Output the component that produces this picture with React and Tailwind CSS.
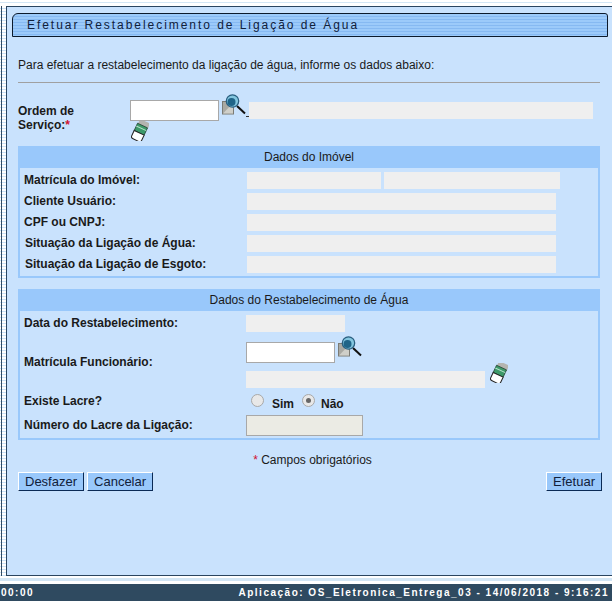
const Lupa = ({ className }) => (
  <svg viewBox="0 0 24 21" className={className}>
    <rect x="0.5" y="7.5" width="11" height="12.5" fill="#a9a9a3" stroke="#7b7b75" />
    <path d="M1 19.5 L11 9 L11 19.5 Z" fill="#cfcfc9" />
    <line x1="15" y1="12" x2="23" y2="19.5" stroke="#111" strokeWidth="2" />
    <circle cx="10.5" cy="7" r="6.2" fill="#83c6df" stroke="#2a5f80" strokeWidth="1.3" />
    <circle cx="9.5" cy="8" r="4" fill="#1f6488" />
  </svg>
);

const Borracha = ({ className }) => (
  <svg viewBox="0 0 18 20" className={className}>
    <g transform="rotate(25 9 10)">
      <rect x="4" y="-1" width="11" height="6" fill="#b4b4b0" />
      <rect x="3.5" y="4" width="11" height="8" fill="#3d9a6a" stroke="#1d3a2c" strokeWidth="0.7" />
      <line x1="3.5" y1="7" x2="14.5" y2="7" stroke="#b8e4cb" strokeWidth="1" />
      <path d="M3.5 12 L14.5 12 L14.5 18 Q14.5 20 12 20 L6 20 Q3.5 20 3.5 18 Z" fill="#fff" stroke="#222" strokeWidth="1" />
    </g>
  </svg>
);

const Campo = ({ className }) => <div className={`h-[17px] bg-[#efefef] ${className}`} />;

const Botao = ({ children }) => (
  <button className="h-[19px] bg-[#99c8fb] text-[13px] leading-[17px] text-[#10203a] border border-t-white border-l-white border-r-[#0a2a55] border-b-[#0a2a55] px-[6px]">
    {children}
  </button>
);

const Linha = ({ label, recuo, children }) => (
  <div className="flex items-center h-[21px]">
    <div className={`w-[227px] pb-[2px] text-[12px] font-bold text-[#1a1a1a] ${recuo ? 'pl-[5px]' : 'pl-[4px]'}`}>{label}</div>
    {children}
  </div>
);

const Radio = ({ checked }) => (
  <span className="w-[13px] h-[13px] mb-[3px] rounded-full border border-[#a8a8a8] bg-[#e8e8e8] flex items-center justify-center">
    {checked && <span className="w-[5px] h-[5px] rounded-full bg-[#666]" />}
  </span>
);

export default function App() {
  return (
    <div className="w-[612px] h-[601px] overflow-hidden bg-white flex flex-col font-['Liberation_Sans',Arial,sans-serif]">
      <div className="h-[6px] shrink-0 bg-white">
        <div className="h-px mt-[2px] bg-[#d3e6f5]" />
      </div>
      <div className="flex-1 flex min-h-0">
        <div className="w-[6px] shrink-0 bg-[repeating-linear-gradient(#fff_0,#fff_2px,#c9e1f7_2px,#c9e1f7_3px)]">
          <div className="ml-px w-px h-full bg-[#2f4a63]" />
        </div>
        <main className="flex-1 bg-[#c9e2fd] border-t border-l border-b border-[#2a4560] pt-[6px] pl-[5px] pr-[6px] flex flex-col">
          <div className="h-[24px] mr-[-2px] bg-[repeating-linear-gradient(#9ccafa_0,#9ccafa_2px,#86b9f2_2px,#86b9f2_3px)] border border-[#0c1a2c] rounded-tl-[6px] rounded-tr-[3px] pl-[14px] text-[12px] leading-[22px] tracking-[1.95px] text-[#10203a]">
            Efetuar Restabelecimento de Ligação de Água
          </div>

          <p className="mt-[21px] ml-[6px] text-[12px] leading-[14px] text-[#1a1a1a]">
            Para efetuar a restabelecimento da ligação de água, informe os dados abaixo:
          </p>
          <div className="mt-[10px] ml-[6px] mr-[6px] h-px bg-[#a0a0a0]" />

          <div className="mt-[17px] ml-[6px] flex">
            <div className="w-[112px] text-[12px] leading-[14px] font-bold text-[#1a1a1a] pt-[4px]">
              Ordem de<br />Serviço:<span className="text-[#d01030]">*</span>
            </div>
            <div className="flex-1">
              <div className="flex items-start h-[21px]">
                <div className="w-[89px] h-[21px] bg-white border border-[#a8a8a8]" />
                <Lupa className="w-[24px] h-[21px] -mt-[6px] ml-[3px]" />
                <div className="w-[3px] h-px mt-[16px] bg-[#333]" />
                <Campo className="w-[344px] mt-[2px]" />
              </div>
              <Borracha className="w-[18px] h-[20px] ml-px" />
            </div>
          </div>

          <section className="mt-[5px] ml-[6px] mr-[6px] border-[2px] border-t-0 border-[#99c8fb]">
            <div className="h-[22px] -mx-[2px] bg-[#99c8fb] text-center text-[12px] leading-[22px] text-[#1a1a1a]">Dados do Imóvel</div>
            <div className="pt-[2px] pb-[1px]">
              <Linha label="Matrícula do Imóvel:">
                <Campo className="w-[134px]" />
                <Campo className="w-[176px] ml-[3px]" />
              </Linha>
              <Linha label="Cliente Usuário:"><Campo className="w-[309px]" /></Linha>
              <Linha label="CPF ou CNPJ:"><Campo className="w-[309px]" /></Linha>
              <Linha label="Situação da Ligação de Água:" recuo><Campo className="w-[309px]" /></Linha>
              <Linha label="Situação da Ligação de Esgoto:" recuo><Campo className="w-[309px]" /></Linha>
            </div>
          </section>

          <section className="mt-[11px] ml-[6px] mr-[6px] border-[2px] border-t-0 border-[#99c8fb]">
            <div className="h-[22px] -mx-[2px] bg-[#99c8fb] text-center text-[12px] leading-[22px] text-[#1a1a1a]">Dados do Restabelecimento de Água</div>
            <div className="pt-[3px] pb-[2px]">
              <div className="flex items-center h-[18px]">
                <div className="w-[226px] pl-[4px] text-[12px] font-bold text-[#1a1a1a]">Data do Restabelecimento:</div>
                <Campo className="w-[99px]" />
              </div>
              <div className="flex mt-[10px]">
                <div className="w-[226px] pl-[4px] pt-[11px] text-[12px] font-bold text-[#1a1a1a]">Matrícula Funcionário:</div>
                <div>
                  <div className="flex items-start h-[27px]">
                    <div className="w-[89px] h-[21px] bg-white border border-[#a8a8a8]" />
                    <Lupa className="w-[24px] h-[21px] -mt-[6px] ml-[3px]" />
                  </div>
                  <div className="flex items-center h-[20px]">
                    <Campo className="w-[239px]" />
                    <Borracha className="w-[18px] h-[20px] ml-[5px] -mt-[12px]" />
                  </div>
                </div>
              </div>
              <div className="flex items-center h-[24px] mt-px">
                <div className="w-[231px] pb-[2px] pl-[4px] text-[12px] font-bold text-[#1a1a1a]">Existe Lacre?</div>
                <Radio />
                <span className="ml-[8px] text-[12px] font-bold text-[#1a1a1a] mt-[4px]">Sim</span>
                <span className="ml-[8px]"><Radio checked /></span>
                <span className="ml-[6px] text-[12px] font-bold text-[#1a1a1a] mt-[4px]">Não</span>
              </div>
              <div className="flex items-center h-[22px]">
                <div className="w-[226px] pl-[4px] text-[12px] font-bold text-[#1a1a1a]">Número do Lacre da Ligação:</div>
                <div className="w-[117px] h-[21px] bg-[#ebebe4] border border-[#a8a8a8]" />
              </div>
            </div>
          </section>

          <p className="mt-[13px] pl-[7px] text-center text-[12px] leading-[14px] text-[#1a1a1a]">
            <span className="text-[#d01030]">*</span> Campos obrigatórios
          </p>
          <div className="mt-[5px] ml-[6px] mr-[4px] flex gap-[3px] justify-start">
            <Botao>Desfazer</Botao>
            <Botao>Cancelar</Botao>
            <span className="flex-1" />
            <Botao>Efetuar</Botao>
          </div>
        </main>
      </div>
      <div className="h-[8px] shrink-0 bg-white pt-[2px]">
        <div className="h-[3px] bg-[#d3e6f5]" />
      </div>
      <footer className="h-[17px] shrink-0 bg-[#2f4a60] flex justify-between pl-px pr-[3px] text-[10px] leading-[17px] font-bold tracking-[1.5px] text-white whitespace-nowrap">
        <span>00:00</span>
        <span>Aplicação: OS_Eletronica_Entrega_03 - 14/06/2018 - 9:16:21</span>
      </footer>
    </div>
  );
}
